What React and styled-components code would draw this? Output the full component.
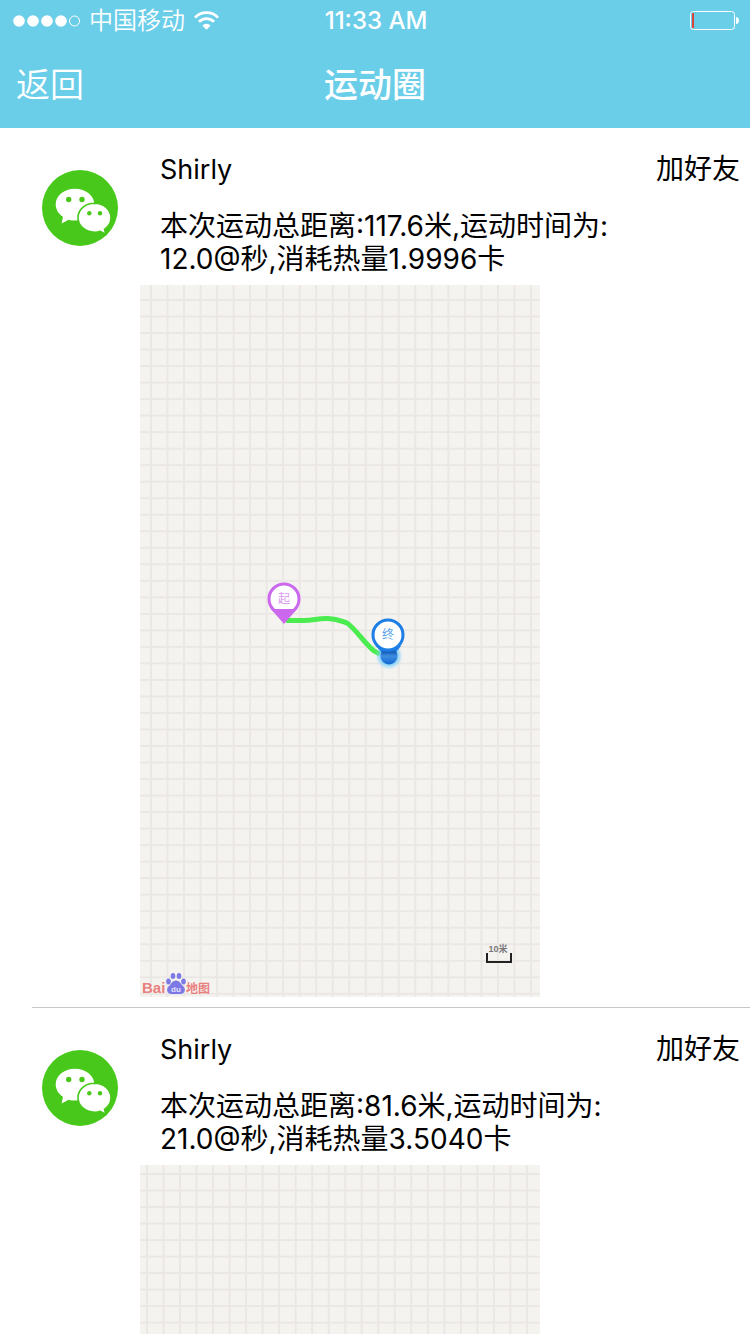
import React from "react";
import styled, { createGlobalStyle } from "styled-components";

const GlobalStyle = createGlobalStyle`
  *, *::before, *::after { box-sizing: border-box; }
  body {
    margin: 0;
    background: #fff;
    color: #000;
    font-family: Inter, "Noto Sans CJK SC", sans-serif;
  }
  button {
    border: 0;
    padding: 0;
    background: none;
    color: inherit;
    font: inherit;
    cursor: pointer;
  }
`;

const Screen = styled.div`
  display: flex;
  flex-direction: column;
  height: 100vh;
`;

const Header = styled.header`
  flex: none;
  background: #6bcee9;
  color: #fff;
`;

const StatusBar = styled.div`
  display: grid;
  grid-template-columns: 1fr auto 1fr;
  align-items: center;
  height: 42px;
  padding: 0 10px 0 12px;
  font-size: 24px;
  line-height: 40px;
`;

const Carrier = styled.div`
  display: flex;
  align-items: center;
  gap: 8px;
  font-weight: 350;
`;

const Clock = styled.time`
  font-size: 24px;
  font-weight: 500;
`;

const Battery = styled.svg`
  justify-self: end;
  display: block;
`;

const NavBar = styled.nav`
  display: grid;
  grid-template-columns: 1fr auto 1fr;
  align-items: center;
  height: 86px;
  padding: 0 16px;
`;

const BackButton = styled.button`
  justify-self: start;
  font-size: 34px;
  font-weight: 350;
  line-height: 40px;
`;

const Title = styled.h1`
  margin: 0;
  font-size: 34px;
  font-weight: 500;
  line-height: 40px;
`;

const Feed = styled.ul`
  flex: 1;
  min-height: 0;
  margin: 0;
  padding: 0;
  list-style: none;
  overflow-y: auto;
  scrollbar-width: none;
`;

const Post = styled.li`
  display: flex;
  align-items: flex-start;
  margin-left: 32px;
  padding-bottom: 10px;
  border-bottom: 1px solid #c8c7cc;
`;

const Avatar = styled.svg`
  flex: none;
  margin: 42px 22px 0 10px;
`;

const PostBody = styled.div`
  flex: 1;
  min-width: 0;
  padding-top: 25px;
  font-size: 28px;
  line-height: 33px;
`;

const PostHead = styled.div`
  display: flex;
  justify-content: space-between;
  padding: 0 10px 0 20px;
`;

const Name = styled.h2`
  margin: 0;
  font-size: 27px;
  font-weight: 400;
`;

const AddFriend = styled.button`
  line-height: 33px;
`;

const Summary = styled.p`
  margin: 24px 10px 9px 20px;
`;

const RouteMap = styled.svg`
  display: block;
  width: 400px;
  max-width: 100%;
  height: auto;
`;

const MapLabel = styled.text`
  font-family: "Liberation Sans", "Noto Sans CJK SC", sans-serif;
  font-size: ${(p) => p.$size}px;
  font-weight: ${(p) => p.$weight || 400};
  fill: ${(p) => p.$color};
  text-anchor: ${(p) => p.$anchor || "start"};
`;

const posts = [
  {
    id: "a",
    name: "Shirly",
    distance: "117.6",
    seconds: "12.0",
    heat: "1.9996",
    grid: [11, 15],
    route: "M146 335.5H164C173 335.5 179 333 188 333.5C197 334 201 336 207 338C215 343 224 358 234 366L240 369",
  },
  { id: "b", name: "Shirly", distance: "81.6", seconds: "21.0", heat: "3.5040", grid: [7, 9] },
];

function Signal() {
  return (
    <svg width="69" height="14" viewBox="0 0 69 14" aria-hidden="true">
      {[7, 21, 35, 49].map((x) => (
        <circle key={x} cx={x} cy="7" r="5.8" fill="#fff" />
      ))}
      <circle cx="62.5" cy="7" r="5" fill="none" stroke="#fff" />
    </svg>
  );
}

function Wifi() {
  return (
    <svg width="28" height="20" viewBox="0 0 28 20" aria-hidden="true">
      <g fill="none" stroke="#fff" strokeWidth="2.8">
        <path d="M2 6.6a16 16 0 0 1 23 0" />
        <path d="M6 10.9a10.4 10.4 0 0 1 15 0" />
      </g>
      <path d="M9.3 14.4a6 6 0 0 1 8.4 0l-4.2 4.3z" fill="#fff" />
    </svg>
  );
}

function WeChatAvatar() {
  return (
    <Avatar width="76" height="76" viewBox="0 0 76 76" role="img" aria-label="微信">
      <circle cx="38" cy="38" r="38" fill="#48c81a" />
      <path
        d="M33 18.7c-11 0-19.3 7-19.3 15.8 0 5 2.8 9.4 7.3 12.3L19.6 53.4l7-3.7c2 .6 4.2.9 6.4.9 10.8 0 19.4-7 19.4-16S43.8 18.7 33 18.7z"
        fill="#fff"
      />
      <path
        d="M52.5 33.200c-9.2 0-16.5 6.5-16.5 14.5s7.3 14.5 16.5 14.5c2 0 3.9-.3 5.6-.9l5.7 3-1.3-5c4-2.700 6.5-6.900 6.500-11.600 0-8-7.300-14.500-16.500-14.500z"
        fill="#fff"
        stroke="#48c81a"
        strokeWidth="1.6"
      />
      <g fill="#48c81a">
        <circle cx="26.7" cy="29.5" r="2.7" />
        <circle cx="40" cy="29.5" r="2.7" />
        <circle cx="47.3" cy="43.3" r="2.2" />
        <circle cx="58" cy="43.3" r="2.2" />
      </g>
    </Avatar>
  );
}

function RouteOverlay({ id, route }) {
  return (
    <>
      <path d={route} fill="none" stroke="#4aec50" strokeWidth="5" />

      <circle cx="144" cy="314" r="15" fill="#fff" stroke="#cb68ee" strokeWidth="3" />
      <path d="M131 324H157L144 339z" fill="#cb68ee" />
      <MapLabel x="144" y="318" $size={12} $color="#d99af0" $anchor="middle">起</MapLabel>

      <circle cx="249" cy="371" r="14" fill={`url(#glow-${id})`} />
      <path d="M236 361L249 376L261 361z" fill="#1d7fe6" />
      <circle cx="249" cy="371" r="8.5" fill={`url(#ball-${id})`} />
      <circle cx="248" cy="350" r="15" fill="#fff" stroke="#1d7fe6" strokeWidth="3" />
      <MapLabel x="248" y="354" $size={12} $color="#5b9fe8" $anchor="middle">终</MapLabel>

      <MapLabel x="358" y="667" $size={9} $weight={700} $color="#777" $anchor="middle">10米</MapLabel>
      <path d="M347 668V677H371V668" fill="none" stroke="#222" strokeWidth="2" />

      <MapLabel x="2" y="708" $size={15} $weight={700} $color="#e98080">Bai</MapLabel>
      <g fill="#7c79e6">
        <ellipse cx="28.5" cy="696.5" rx="2.3" ry="3" />
        <ellipse cx="33" cy="691" rx="2.3" ry="3" />
        <ellipse cx="39" cy="691" rx="2.3" ry="3" />
        <ellipse cx="43.5" cy="696.5" rx="2.3" ry="3" />
        <path d="M36 695.5c-4 0-5 4-7.5 6-2.5 2.5-1.5 7.5 3 7.5h9c4.5 0 5.5-5 3-7.5-2.5-2-3.5-6-7.5-6z" />
      </g>
      <MapLabel x="36" y="707" $size={8} $weight={700} $color="#e4e2fb" $anchor="middle">du</MapLabel>
      <MapLabel x="46" y="708" $size={12} $weight={700} $color="#e98080">地图</MapLabel>
    </>
  );
}

function MapView({ id, grid, route }) {
  const pitch = 16.52;
  return (
    <RouteMap viewBox="0 0 400 712" role="img" aria-label="运动轨迹">
      <defs>
        <pattern
          id={`grid-${id}`}
          x={grid[0] - 1}
          y={grid[1] - 1}
          width={pitch}
          height={pitch}
          patternUnits="userSpaceOnUse"
        >
          <path d={`M0 1H${pitch}M1 0V${pitch}`} stroke="#eae7e5" strokeWidth="2" />
        </pattern>
        <radialGradient id={`glow-${id}`}>
          <stop offset="0.6" stopColor="#64c8fa" stopOpacity="0.8" />
          <stop offset="1" stopColor="#8fdcfb" stopOpacity="0" />
        </radialGradient>
        <linearGradient id={`ball-${id}`} x2="0" y2="1">
          <stop offset="0.3" stopColor="#1b62bd" />
          <stop offset="0.5" stopColor="#3d8ee0" />
          <stop offset="1" stopColor="#1266d2" />
        </linearGradient>
      </defs>
      <rect width="400" height="712" fill="#f5f3f0" />
      <rect width="400" height="712" fill={`url(#grid-${id})`} />
      {route && <RouteOverlay id={id} route={route} />}
    </RouteMap>
  );
}

export default function App() {
  return (
    <Screen>
      <GlobalStyle />
      <Header>
        <StatusBar>
          <Carrier>
            <Signal />
            中国移动
            <Wifi />
          </Carrier>
          <Clock>11:33 AM</Clock>
          <Battery width="50" height="20" viewBox="0 0 50 20" aria-hidden="true">
            <rect x="0.5" y="0.5" width="44" height="18" rx="3" fill="none" stroke="#fff" />
            <rect x="2" y="2" width="2" height="15" fill="#d9483f" />
            <path d="M46 6c4 0 4 7 0 7z" fill="#fff" />
          </Battery>
        </StatusBar>
        <NavBar>
          <BackButton type="button">返回</BackButton>
          <Title>运动圈</Title>
        </NavBar>
      </Header>
      <Feed>
        {posts.map((post) => (
          <Post key={post.id}>
            <WeChatAvatar />
            <PostBody>
              <PostHead>
                <Name>{post.name}</Name>
                <AddFriend type="button">加好友</AddFriend>
              </PostHead>
              <Summary>
                本次运动总距离:{post.distance}米,运动时间为:
                <br />
                {post.seconds}@秒,消耗热量{post.heat}卡
              </Summary>
              <MapView id={post.id} grid={post.grid} route={post.route} />
            </PostBody>
          </Post>
        ))}
      </Feed>
    </Screen>
  );
}
